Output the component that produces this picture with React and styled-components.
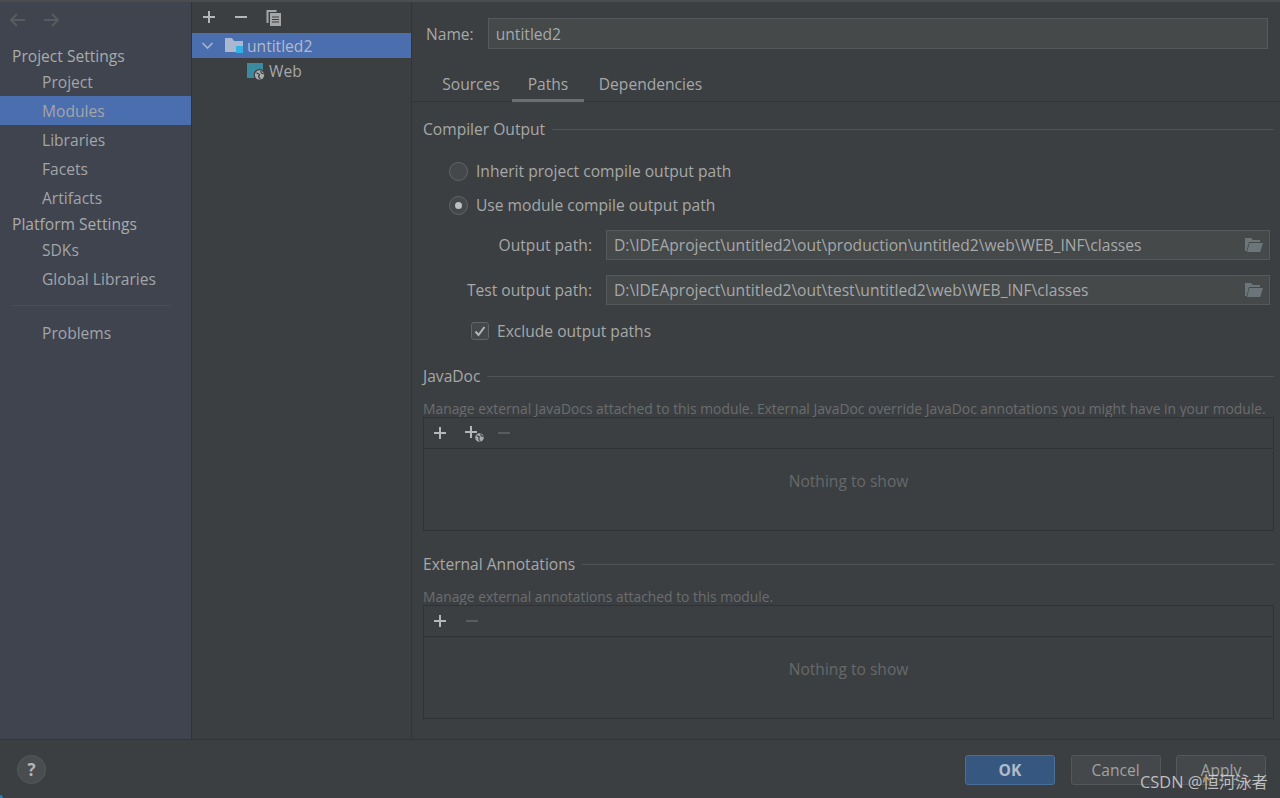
import React from "react";
import styled, { createGlobalStyle } from "styled-components";

const GlobalStyle = createGlobalStyle`
	html, body {
		margin: 0;
		padding: 0;
		background: #3c3f41;
	}
	* {
		box-sizing: border-box;
	}
`;

const FONT = `"Open Sans", "Noto Sans", "Noto Sans CJK SC", sans-serif`;

function Plus({ color = "#b4b6b7" }) {
	return (
		<svg width="16" height="16" viewBox="0 0 16 16">
			<path d="M8 2v12M2 8h12" stroke={color} strokeWidth="2" />
		</svg>
	);
}

function Minus({ color = "#b4b6b7" }) {
	return (
		<svg width="16" height="16" viewBox="0 0 16 16">
			<path d="M2 8h12" stroke={color} strokeWidth="2" />
		</svg>
	);
}

function Globe({ x = 0, y = 0, size = 10, bg = "#3c3f41" }) {
	return (
		<svg x={x} y={y} width={size} height={size} viewBox="0 0 10 10">
			<circle cx="5" cy="5" r="5" fill={bg} />
			<circle cx="5" cy="5" r="3.9" fill="#a9abad" />
			<path d="M2.5 3.2 5 4.6 4.2 6.4 5.8 8.6M6 1.6 6.6 3.4 8.6 4.2" stroke={bg} strokeWidth="1" fill="none" />
		</svg>
	);
}

function PlusGlobe() {
	return (
		<svg width="16" height="20" viewBox="0 0 16 20" style={{ overflow: "visible" }}>
			<path d="M7 3v12M1 9h12" stroke="#b4b6b7" strokeWidth="2" />
			<Globe x={10} y={9} size={11} />
		</svg>
	);
}

function FolderOpen() {
	return (
		<svg width="20" height="16" viewBox="0 0 20 16">
			<path d="M1 1h6l2 2h7v2H5L2.5 14H1z" fill="#6c7579" />
			<path d="M5.5 6H19l-2.8 9H3z" fill="#6c7579" />
		</svg>
	);
}

const Window = styled.div`
	width: 1280px;
	height: 798px;
	display: flex;
	flex-direction: column;
	position: relative;
	overflow: hidden;
	background: #3c3f41;
	border-top: 2px solid #4a4c4e;
	font-family: ${FONT};
	font-size: 15.6px;
	color: #a6a8a9;
`;

const Body = styled.div`
	display: flex;
	height: 738px;
	border-bottom: 1px solid #323436;
`;

const Sidebar = styled.aside`
	width: 192px;
	flex-shrink: 0;
	background: #3f444f;
	border-right: 1px solid #313335;
	display: flex;
	flex-direction: column;
`;

const NavArrows = styled.div`
	height: 41px;
	padding: 9px 0 0 8px;
	display: flex;
	gap: 13px;
`;

const Heading = styled.div`
	height: ${(p) => p.$height || 26}px;
	line-height: ${(p) => p.$height || 26}px;
	padding-left: 12px;
	color: #a9abac;
`;

const NavItem = styled.div`
	height: ${(p) => p.$height || 29}px;
	line-height: ${(p) => (p.$height || 30)}px;
	padding-left: 42px;
	color: #a3a5a7;
	background: ${(p) => (p.$active ? "#4b6eaf" : "transparent")};
`;

const SideRule = styled.div`
	height: 1px;
	margin: 12px 20px 12px 12px;
	background: #4a4e58;
`;

const TreePanel = styled.section`
	width: 220px;
	flex-shrink: 0;
	background: #3c3f41;
	border-right: 1px solid #323436;
	display: flex;
	flex-direction: column;
`;

const TreeTools = styled.div`
	height: 31px;
	padding: 7px 0 0 9px;
	display: flex;
	gap: 16px;
`;

const TreeRow = styled.div`
	height: 25px;
	display: flex;
	align-items: center;
	padding-left: ${(p) => p.$indent}px;
	gap: ${(p) => p.$gap}px;
	background: ${(p) => (p.$selected ? "#4b6eaf" : "transparent")};
	color: ${(p) => (p.$selected ? "#b3bbca" : "#a6a8a9")};
`;

const Main = styled.main`
	flex: 1;
	min-width: 0;
	display: flex;
	flex-direction: column;
`;

const NameRow = styled.div`
	display: flex;
	align-items: center;
	padding: 16px 12px 0 14px;
	gap: 14px;
`;

const Input = styled.div`
	flex: 1;
	height: ${(p) => p.$height || 30}px;
	display: flex;
	align-items: center;
	justify-content: space-between;
	padding: 0 5px 0 7px;
	background: #45494a;
	border: 1px solid #56595b;
	color: #a6a8a9;
`;

const Tabs = styled.div`
	display: flex;
	margin-top: 19px;
	height: 34px;
	padding-left: 18px;
	border-bottom: 1px solid #323436;
`;

const Tab = styled.div`
	width: ${(p) => p.$width}px;
	height: 34px;
	padding-top: 2px;
	text-align: center;
	line-height: 29px;
	border-bottom: ${(p) => (p.$active ? "3px solid #6c7074" : "none")};
`;

const Content = styled.div`
	padding: 0 6px 0 11px;
	display: flex;
	flex-direction: column;
`;

const SectionTitle = styled.div`
	display: flex;
	align-items: center;
	gap: 7px;
	height: 22px;
	margin-top: ${(p) => p.$top}px;
	white-space: nowrap;
	&::after {
		content: "";
		flex: 1;
		height: 1px;
		background: #505355;
	}
`;

const OptionRow = styled.div`
	display: flex;
	align-items: center;
	gap: 8px;
	height: 20px;
	padding-left: ${(p) => p.$indent}px;
	margin-top: ${(p) => p.$top}px;
`;

const Radio = styled.span`
	width: 19px;
	height: 19px;
	border-radius: 50%;
	border: 1px solid #626567;
	background: #44484a;
	display: flex;
	align-items: center;
	justify-content: center;
	&::after {
		content: "";
		width: 7px;
		height: 7px;
		border-radius: 50%;
		background: ${(p) => (p.$checked ? "#bdbfc0" : "transparent")};
	}
`;

const Check = styled.span`
	width: 18px;
	height: 18px;
	border-radius: 3px;
	border: 1px solid #626567;
	background: #44484a;
	display: flex;
	align-items: center;
	justify-content: center;
`;

const PathRow = styled.div`
	display: flex;
	align-items: center;
	height: 30px;
	margin-top: ${(p) => p.$top}px;
	margin-right: 4px;
`;

const PathLabel = styled.label`
	width: 183px;
	padding-right: 14px;
	text-align: right;
	flex-shrink: 0;
`;

const Hint = styled.div`
	height: 17px;
	line-height: 17px;
	margin-top: ${(p) => p.$top}px;
	font-size: 13.85px;
	color: #6a6d6f;
	white-space: nowrap;
`;

const ListBox = styled.div`
	height: 114px;
	border: 1px solid #303234;
	display: flex;
	flex-direction: column;
`;

const ListTools = styled.div`
	height: 31px;
	flex-shrink: 0;
	border-bottom: 1px solid #303234;
	display: flex;
	align-items: center;
	padding-left: 8px;
	gap: 16px;
`;

const Empty = styled.div`
	flex: 1;
	display: flex;
	align-items: center;
	justify-content: center;
	padding-bottom: 18px;
	color: #66696b;
`;

const Footer = styled.footer`
	flex: 1;
	display: flex;
	align-items: flex-start;
	justify-content: space-between;
	padding: 15px 14px 0 17px;
`;

const Help = styled.div`
	width: 29px;
	height: 29px;
	border-radius: 50%;
	background: #4a4d4f;
	border: 1px solid #55585a;
	display: flex;
	align-items: center;
	justify-content: center;
	color: #b2b4b5;
	font-weight: 700;
	font-size: 17px;
`;

const Buttons = styled.div`
	display: flex;
	gap: 15.5px;
`;

const Button = styled.button`
	width: 90px;
	height: 30px;
	border-radius: 3px;
	font-family: ${FONT};
	font-size: 15.6px;
	font-weight: ${(p) => (p.$primary ? 700 : 400)};
	color: ${(p) => (p.$primary ? "#b0bcca" : "#a0a2a4")};
	background: ${(p) => (p.$primary ? "#365880" : "#45484a")};
	border: 1px solid ${(p) => (p.$primary ? "#4a709a" : "#55585a")};
	padding: 0;
`;

const Watermark = styled.div`
	position: absolute;
	right: 12px;
	bottom: 6px;
	font-size: 16.4px;
	line-height: 20px;
	color: rgba(218, 220, 222, 0.82);
	white-space: nowrap;
`;

const Corner = styled.div`
	position: absolute;
	left: -4px;
	bottom: -4px;
	width: 7px;
	height: 7px;
	border-radius: 50%;
	background: #1d7fc4;
`;

const sideTop = [
	{ name: "Project", height: 27 },
	{ name: "Modules", active: true },
	{ name: "Libraries" },
	{ name: "Facets" },
	{ name: "Artifacts" },
];

export default function App() {
	return (
		<Window>
			<GlobalStyle />
			<Body>
				<Sidebar>
					<NavArrows>
						<svg width="20" height="18" viewBox="0 0 20 18">
							<path d="M17 9H3M9 3 3 9l6 6" stroke="#585b5e" strokeWidth="2" fill="none" />
						</svg>
						<svg width="20" height="18" viewBox="0 0 20 18">
							<path d="M3 9h14M11 3l6 6-6 6" stroke="#585b5e" strokeWidth="2" fill="none" />
						</svg>
					</NavArrows>
					<Heading>Project Settings</Heading>
					{sideTop.map((item) => (
						<NavItem key={item.name} $active={item.active} $height={item.height}>
							{item.name}
						</NavItem>
					))}
					<Heading $height={25}>Platform Settings</Heading>
					<NavItem $height={27}>SDKs</NavItem>
					<NavItem>Global Libraries</NavItem>
					<SideRule />
					<NavItem>Problems</NavItem>
				</Sidebar>
				<TreePanel>
					<TreeTools>
						<Plus />
						<Minus />
						<svg width="18" height="18" viewBox="0 0 18 18">
							<path d="M1.5 1h10v2h-8v11h-2z" fill="#a4a6a8" />
							<path d="M5 4h11v13H5z" fill="#a4a6a8" />
							<path d="M7 8h7M7 10.5h7M7 13h7" stroke="#3c3f41" strokeWidth="1.2" />
						</svg>
					</TreeTools>
					<TreeRow $selected $indent={9} $gap={3}>
						<svg width="13" height="13" viewBox="0 0 13 13" style={{ marginRight: 7 }}>
							<path d="M1.5 4 6.5 9l5-5" stroke="#a8b4c8" strokeWidth="1.6" fill="none" />
						</svg>
						<svg width="20" height="19" viewBox="0 0 20 19">
							<path d="M1 2h7l2 3h9v11H1z" fill="#a9b7cf" />
							<path d="M12 10h7v7h-7z" fill="#35b0e2" />
						</svg>
						untitled2
					</TreeRow>
					<TreeRow $indent={55} $gap={4}>
						<svg width="18" height="18" viewBox="0 0 18 18" style={{ overflow: "visible" }}>
							<path d="M0 1h16v15H0z" fill="#3c8aa0" />
							<Globe x={6.5} y={7} size={12} />
						</svg>
						Web
					</TreeRow>
				</TreePanel>
				<Main>
					<NameRow>
						Name:
						<Input $height={31}>untitled2</Input>
					</NameRow>
					<Tabs>
						<Tab $width={82}>Sources</Tab>
						<Tab $width={72} $active>Paths</Tab>
						<Tab $width={133}>Dependencies</Tab>
					</Tabs>
					<Content>
						<SectionTitle $top={16}>Compiler Output</SectionTitle>
						<OptionRow $indent={26} $top={21}>
							<Radio />
							Inherit project compile output path
						</OptionRow>
						<OptionRow $indent={26} $top={14}>
							<Radio $checked />
							Use module compile output path
						</OptionRow>
						<PathRow $top={15}>
							<PathLabel>Output path:</PathLabel>
							<Input>
								D:\IDEAproject\untitled2\out\production\untitled2\web\WEB_INF\classes
								<FolderOpen />
							</Input>
						</PathRow>
						<PathRow $top={15}>
							<PathLabel>Test output path:</PathLabel>
							<Input>
								D:\IDEAproject\untitled2\out\test\untitled2\web\WEB_INF\classes
								<FolderOpen />
							</Input>
						</PathRow>
						<OptionRow $indent={48} $top={16}>
							<Check>
								<svg width="14" height="14" viewBox="0 0 14 14">
									<path d="M2.5 7.5 5.5 11l6-8" stroke="#b4b6b7" strokeWidth="2" fill="none" />
								</svg>
							</Check>
							Exclude output paths
						</OptionRow>
						<SectionTitle $top={24}>JavaDoc</SectionTitle>
						<Hint $top={13}>
							Manage external JavaDocs attached to this module. External JavaDoc override JavaDoc annotations you might have in your module.
						</Hint>
						<ListBox>
							<ListTools>
								<Plus />
								<PlusGlobe />
								<Minus color="#595c5e" />
							</ListTools>
							<Empty>Nothing to show</Empty>
						</ListBox>
						<SectionTitle $top={22}>External Annotations</SectionTitle>
						<Hint $top={13}>Manage external annotations attached to this module.</Hint>
						<ListBox>
							<ListTools>
								<Plus />
								<Minus color="#595c5e" />
							</ListTools>
							<Empty>Nothing to show</Empty>
						</ListBox>
					</Content>
				</Main>
			</Body>
			<Footer>
				<Help>?</Help>
				<Buttons>
					<Button $primary>OK</Button>
					<Button>Cancel</Button>
					<Button>Apply</Button>
				</Buttons>
			</Footer>
			<Watermark>CSDN @恒河泳者</Watermark>
			<Corner />
		</Window>
	);
}
